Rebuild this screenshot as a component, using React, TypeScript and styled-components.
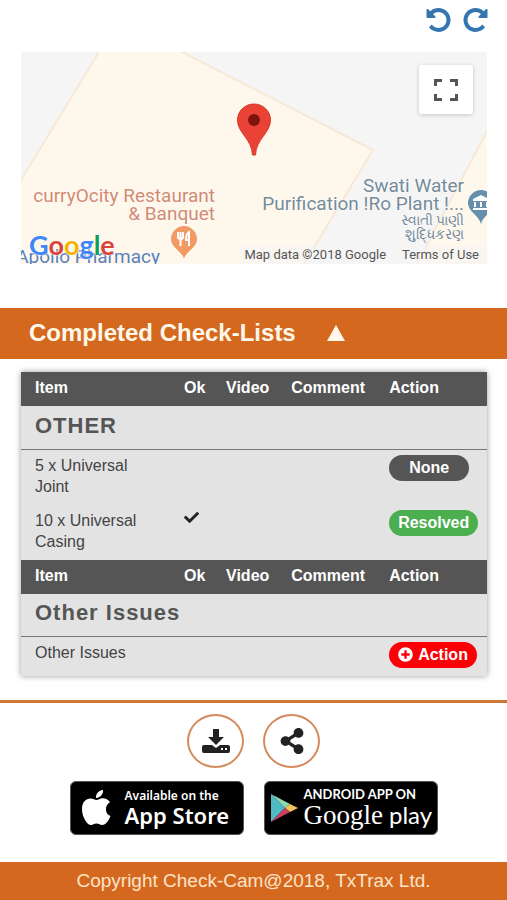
import React, { useState } from "react";
import styled, { createGlobalStyle } from "styled-components";
import { FaCheck, FaPlusCircle, FaShareAlt } from "react-icons/fa";

const orange = "#d4681f";
const slate = "#555555";

const GlobalStyle = createGlobalStyle`
  *, *::before, *::after { box-sizing: border-box; }
  body {
    margin: 0;
    background: #fff;
    color: #444;
    font-family: "Liberation Sans", Arial, sans-serif;
    font-size: 16px;
    line-height: 21px;
  }
  button { font: inherit; cursor: pointer; }
`;

const Page = styled.div`
  min-height: 100vh;
  display: flex;
  flex-direction: column;
`;

const Toolbar = styled.div`
  height: 52px;
  display: flex;
  justify-content: flex-end;
  align-items: flex-start;
  gap: 12px;
  padding: 8px 19px 0;
`;

const ToolButton = styled.button<{ $mirrored?: boolean }>`
  display: flex;
  padding: 0;
  border: 0;
  background: none;
  color: #3575b0;
  svg {
    width: 25px;
    height: 24px;
    transform: ${(p) => (p.$mirrored ? "scaleX(-1)" : "none")};
  }
`;

const MapFrame = styled.section`
  position: relative;
  height: 212px;
  margin: 0 20px 0 21px;
  overflow: hidden;
  background: #f5f5f5;
  font-family: Roboto, sans-serif;
`;

const MapGround = styled.svg`
  position: absolute;
  inset: 0;
  width: 100%;
  height: 100%;
`;

const FullscreenButton = styled.button`
  position: absolute;
  top: 13px;
  right: 14px;
  width: 54px;
  height: 49px;
  display: flex;
  align-items: center;
  justify-content: center;
  border: 0;
  border-radius: 2px;
  background: #fff;
  box-shadow: 0 1px 4px rgba(0, 0, 0, 0.2);
`;

const Marker = styled.svg<{ $left: string; $top: number }>`
  position: absolute;
  left: ${(p) => p.$left};
  top: ${(p) => p.$top}px;
`;

const PlaceLabel = styled.div<{ $right: string; $top: number; $color: string }>`
  position: absolute;
  right: ${(p) => p.$right};
  top: ${(p) => p.$top}px;
  color: ${(p) => p.$color};
  font-size: 19px;
  line-height: 18px;
  text-align: right;
  white-space: nowrap;
  text-shadow: 0 0 2px #fff, 0 0 2px #fff;
`;

const LocalName = styled.div`
  font-size: 14px;
  line-height: 14px;
`;

const MapLogo = styled.a`
  position: absolute;
  left: 8px;
  top: 178px;
  font-family: Lato, sans-serif;
  font-size: 27px;
  line-height: 30px;
  font-weight: 700;
  text-decoration: none;
  text-shadow: 0 0 2px #fff, 0 0 2px #fff;
`;

const LogoLetter = styled.span<{ $color: string }>`
  color: ${(p) => p.$color};
`;

const MapCredits = styled.div`
  position: absolute;
  right: 0;
  bottom: 0;
  display: flex;
  gap: 16px;
  padding: 0 8px 0 4px;
  background: rgba(245, 245, 245, 0.6);
  color: #555;
  font-size: 13px;
  line-height: 18px;
  a { color: inherit; text-decoration: none; }
`;

const SectionToggle = styled.button`
  display: flex;
  align-items: center;
  gap: 31px;
  height: 51px;
  margin-top: 44px;
  padding: 0 29px 2px;
  border: 0;
  background: ${orange};
  color: #fff8ea;
  && { font-size: 24px; font-weight: 700; }
`;

const ToggleArrow = styled.svg<{ $open: boolean }>`
  width: 18px;
  height: 16px;
  transform: ${(p) => (p.$open ? "none" : "rotate(180deg)")};
`;

const Card = styled.div`
  margin: 13px 20px 0 21px;
  background: #e3e3e3;
  box-shadow: 0 0 6px rgba(0, 0, 0, 0.4);
`;

const CheckTable = styled.table`
  width: 100%;
  table-layout: fixed;
  border-collapse: collapse;
  text-align: left;
`;

const Column = styled.col<{ $share: number }>`
  width: ${(p) => p.$share}%;
`;

const HeadCell = styled.th`
  height: 34px;
  padding: 0 0 3px;
  background: ${slate};
  color: #fff;
  &:first-child { padding-left: 14px; }
`;

const GroupCell = styled.th`
  height: 43px;
  padding: 0 14px 4px;
  border-bottom: 1px solid #777;
  color: ${slate};
  font-size: 22px;
  letter-spacing: 1px;
`;

const Cell = styled.td`
  padding: 5px 0 8px;
  vertical-align: top;
  &:first-child { padding-left: 14px; padding-right: 32px; }
`;

const CheckMark = styled(FaCheck)`
  display: block;
  width: 15px;
  height: 15px;
  color: #222;
`;

const StatusButton = styled.button<{ $tone: string; $wide?: boolean }>`
  display: flex;
  align-items: center;
  gap: 5px;
  height: 26px;
  padding: 0 ${(p) => (p.$wide ? 20 : 9)}px 1px;
  border: 0;
  border-radius: 13px;
  background: ${(p) => p.$tone};
  color: #fff;
  && { font-weight: 700; }
  svg { width: 15px; height: 15px; }
`;

const Divider = styled.hr`
  width: 100%;
  height: 3px;
  margin: 24px 0 0;
  border: 0;
  background: #cd7637;
`;

const RoundActions = styled.div`
  display: flex;
  justify-content: center;
  gap: 19px;
  margin-top: 11px;
`;

const RoundButton = styled.button`
  width: 57px;
  height: 54px;
  display: flex;
  align-items: center;
  justify-content: center;
  padding: 0;
  border: 2px solid #d58a5c;
  border-radius: 50%;
  background: #fff;
  color: #222;
`;

const Stores = styled.div`
  display: flex;
  flex-wrap: wrap;
  justify-content: center;
  gap: 20px;
  margin: 13px 0 27px;
`;

const StoreBadge = styled.a`
  width: 174px;
  height: 54px;
  display: flex;
  align-items: center;
  gap: 6px;
  padding: 0 6px;
  border: 1px solid #555;
  border-radius: 6px;
  background: #000;
  color: #fff;
  text-decoration: none;
  white-space: nowrap;
  svg { flex: none; }
`;

const StoreText = styled.span`
  display: flex;
  flex-direction: column;
`;

const AppleCaption = styled.span`
  font: 600 12px/14px "Noto Sans", sans-serif;
`;

const AppleName = styled.span`
  font: 600 22px/24px "Noto Sans", sans-serif;
`;

const AppleText = styled(StoreText)`
  margin-left: 4px;
`;

const PlayCaption = styled.span`
  font: 700 13px/14px Lato, sans-serif;
`;

const PlayName = styled.span`
  display: flex;
  gap: 6px;
  font: 27px/28px "Liberation Serif", serif;
`;

const PlayWord = styled.span`
  font: 24px/28px Lato, sans-serif;
`;

const Footer = styled.footer`
  flex: 1 0 37px;
  padding: 8px 16px;
  background: ${orange};
  color: #fde3c8;
  font-size: 19px;
  text-align: center;
`;

const UndoIcon = () => (
  <svg viewBox="0 128 1536 1536" fill="currentColor" aria-hidden="true">
    <path d="M1536 896q0 156-61 298t-164 245-245 164-298 61q-172 0-327-72.500T177 1387q-7-10-6.500-22.500t8.500-20.500l137-138q10-9 25-9 16 2 23 12 73 95 179 147t225 52q104 0 198.500-40.500T1130 1258t109.500-163.500T1280 896t-40.500-198.500T1130 534 966.500 424.500 768 384q-98 0-188 35.500T420 521l137 138q31 30 14 69-17 40-59 40H64q-26 0-45-19T0 704V256q0-42 40-59 39-17 69 14l130 129q107-101 244.500-156.500T768 128q156 0 298 61t245 164 164 245 61 298z" />
  </svg>
);

const logoLetters: [string, string][] = [
  ["G", "#4285f4"],
  ["o", "#db4437"],
  ["o", "#f4b400"],
  ["g", "#4285f4"],
  ["l", "#0f9d58"],
  ["e", "#db4437"],
];

const HeaderRow = () => (
  <tr>
    {["Item", "Ok", "Video", "Comment", "Action"].map((name) => (
      <HeadCell key={name} scope="col">{name}</HeadCell>
    ))}
  </tr>
);

type Status = "None" | "Resolved" | "Action";
const tones: Record<Status, string> = { None: slate, Resolved: "#4bae4f", Action: "#fb0007" };

const ItemRow = ({ name, ok, status }: { name: string; ok?: boolean; status: Status }) => (
  <tr>
    <Cell>{name}</Cell>
    <Cell>{ok && <CheckMark aria-label="Ok" />}</Cell>
    <Cell />
    <Cell />
    <Cell>
      <StatusButton type="button" $tone={tones[status]} $wide={status === "None"}>
        {status === "Action" && <FaPlusCircle aria-hidden="true" />}
        {status}
      </StatusButton>
    </Cell>
  </tr>
);

const LocationMap = () => (
  <MapFrame aria-label="Map">
    <MapGround viewBox="0 0 466 212" preserveAspectRatio="none" aria-hidden="true">
      <path d="M78 0H161L352 98L283 212H0V128Z" fill="#fef7eb" />
      <path d="M466 79V212H396Z" fill="#fef7eb" />
      <path d="M78 0L0 128M161 0L352 98L283 212M466 79L396 212" fill="none" stroke="#f7e8d8" strokeWidth="2" />
    </MapGround>
    <Marker $left="calc(50% - 17px)" $top={51} width="34" height="53" viewBox="0 0 34 53" aria-hidden="true">
      <path d="M17 1C8 1 0.500 8 0.500 17C0.500 30 15 36 15.500 52H18.500C19 36 33.500 30 33.500 17C33.500 8 26 1 17 1Z" fill="#ea4335" stroke="#d03a2d" />
      <circle cx="17" cy="17" r="6" fill="#7d1410" />
    </Marker>
    <PlaceLabel $right="calc(50% + 39px)" $top={135} $color="#d38a70">
      curryOcity Restaurant<br />&amp; Banquet
    </PlaceLabel>
    <Marker $left="32%" $top={173} width="28" height="35" viewBox="0 0 28 35" aria-hidden="true">
      <path d="M14 1C7 1 1 7 1 14C1 23 12 26 14 34C16 26 27 23 27 14C27 7 21 1 14 1Z" fill="#f29a64" />
      <path d="M8 7V12Q8 14 10.500 14T13 12V7M10.500 7V21M19 21V7Q16 9 16 15H19" fill="none" stroke="#fff" strokeWidth="2" />
    </Marker>
    <PlaceLabel $right="calc(50% + 94px)" $top={196} $color="#5b80b8">
      Apollo Pharmacy
    </PlaceLabel>
    <PlaceLabel $right="23px" $top={125} $color="#768b9a">
      Swati Water<br />Purification !Ro Plant !...
      <LocalName lang="gu">સ્વાતી પાણી<br />શુદ્ધિકરણ</LocalName>
    </PlaceLabel>
    <Marker $left="calc(100% - 20px)" $top={137} width="28" height="36" viewBox="0 0 28 36" aria-hidden="true">
      <path d="M14 1C7 1 1 7 1 14C1 23 12 26 14 35C16 26 27 23 27 14C27 7 21 1 14 1Z" fill="#668fac" />
      <path d="M14 6L22 10V12H6V10ZM7 13H9V18H7ZM13 13H15V18H13ZM19 13H21V18H19ZM6 19H22V21H6Z" fill="#fff" />
    </Marker>
    <MapLogo href="#map" aria-label="Google">
      {logoLetters.map(([letter, color], i) => (
        <LogoLetter key={i} $color={color}>{letter}</LogoLetter>
      ))}
    </MapLogo>
    <MapCredits>
      <span>Map data ©2018 Google</span>
      <a href="#terms">Terms of Use</a>
    </MapCredits>
    <FullscreenButton type="button" aria-label="Toggle fullscreen">
      <svg width="26" height="24" viewBox="0 0 26 24" fill="none" stroke="#555" strokeWidth="3" aria-hidden="true">
        <path d="M2.500 8V2.500H9M17 2.500H23.500V8M23.500 16V21.500H17M9 21.500H2.500V16" />
      </svg>
    </FullscreenButton>
  </MapFrame>
);

export default function App() {
  const [open, setOpen] = useState(true);
  return (
    <Page>
      <GlobalStyle />
      <Toolbar>
        <ToolButton type="button" aria-label="Rotate left"><UndoIcon /></ToolButton>
        <ToolButton type="button" aria-label="Rotate right" $mirrored><UndoIcon /></ToolButton>
      </Toolbar>
      <LocationMap />
      <SectionToggle type="button" aria-expanded={open} onClick={() => setOpen(!open)}>
        Completed Check-Lists
        <ToggleArrow $open={open} viewBox="0 0 18 16" aria-hidden="true">
          <path d="M9 0L18 16H0Z" fill="currentColor" />
        </ToggleArrow>
      </SectionToggle>
      {open && (
        <Card>
          <CheckTable>
            <colgroup>
              {[35, 9, 14, 21, 21].map((share, i) => <Column key={i} $share={share} />)}
            </colgroup>
            <tbody>
              <HeaderRow />
              <tr><GroupCell colSpan={5}>OTHER</GroupCell></tr>
              <ItemRow name="5 x Universal Joint" status="None" />
              <ItemRow name="10 x Universal Casing" ok status="Resolved" />
            </tbody>
            <tbody>
              <HeaderRow />
              <tr><GroupCell colSpan={5}>Other Issues</GroupCell></tr>
              <ItemRow name="Other Issues" status="Action" />
            </tbody>
          </CheckTable>
        </Card>
      )}
      <Divider />
      <RoundActions>
        <RoundButton type="button" aria-label="Download">
          <svg width="28" height="26" viewBox="0 0 28 26" fill="currentColor" aria-hidden="true">
            <path d="M11 1H17V9H22L14 17L6 9H11Z" />
            <path fillRule="evenodd" d="M2 17H10L14 20L18 17H26Q28 17 28 19V23Q28 25 26 25H2Q0 25 0 23V19Q0 17 2 17ZM19 20V22H21V20ZM23 20V22H25V20Z" />
          </svg>
        </RoundButton>
        <RoundButton type="button" aria-label="Share">
          <FaShareAlt size={26} aria-hidden="true" />
        </RoundButton>
      </RoundActions>
      <Stores>
        <StoreBadge href="#app-store">
          <svg width="38" height="38" viewBox="0 0 38 38" fill="#fff" aria-hidden="true">
            <path d="M29 20C29 16 32 14 33 13C30 9 26 9 24 9.500C22 10 21 11 19.500 11C18 11 16 9.500 13.500 9.500C9 9.500 5 13 5 20C5 28 10 36 14 36C16 36 17 34.500 19.500 34.500C22 34.500 23 36 25 36C29 36 32 31 33.500 27C31 26 29 24 29 20Z" />
            <path d="M19 9C18.500 5 22 1 26 1C26.500 5 23 9 19 9Z" />
          </svg>
          <AppleText>
            <AppleCaption>Available on the</AppleCaption>
            <AppleName>App Store</AppleName>
          </AppleText>
        </StoreBadge>
        <StoreBadge href="#google-play">
          <svg width="27" height="30" viewBox="0 0 27 30" aria-hidden="true">
            <path d="M0 1V29L14 15Z" fill="#4fb9c4" />
            <path d="M0 1L19 11L14 15Z" fill="#8ed7b0" />
            <path d="M19 11L27 15L19 19L14 15Z" fill="#f3c45c" />
            <path d="M0 29L14 15L19 19Z" fill="#cf3f62" />
          </svg>
          <StoreText>
            <PlayCaption>ANDROID APP ON</PlayCaption>
            <PlayName>Google <PlayWord>play</PlayWord></PlayName>
          </StoreText>
        </StoreBadge>
      </Stores>
      <Footer>Copyright Check-Cam@2018, TxTrax Ltd.</Footer>
    </Page>
  );
}
